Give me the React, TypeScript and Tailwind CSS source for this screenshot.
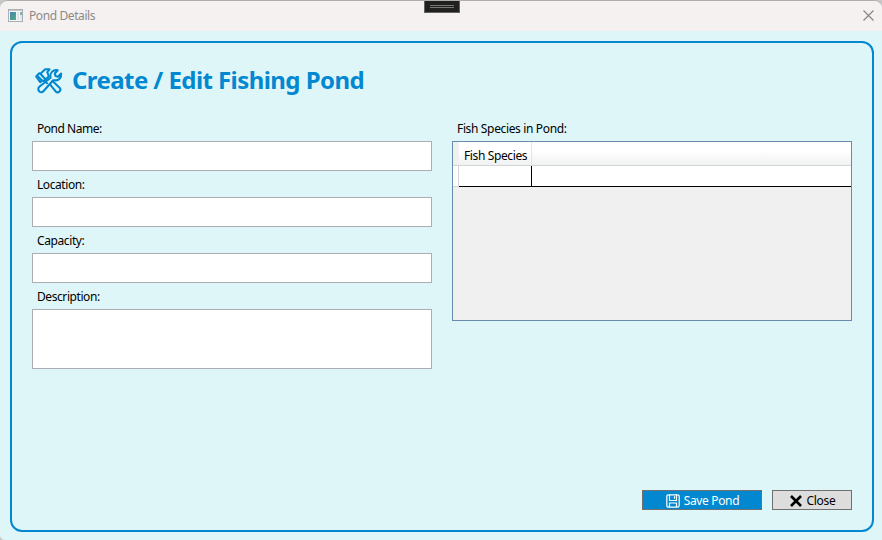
import React from 'react';

function WindowIcon() {
  return (
    <svg className="relative -top-px ml-2 h-[13px] w-[15px]" viewBox="0 0 15 13">
      <defs>
        <linearGradient id="pane" x1="0" y1="0" x2="1" y2="1">
          <stop offset="0" stopColor="#4780bb" />
          <stop offset="1" stopColor="#4fae78" />
        </linearGradient>
      </defs>
      <rect x="0.5" y="0.5" width="14" height="12" fill="#f4f6f7" stroke="#a9aeb3" />
      <rect x="1" y="1" width="13" height="1" fill="#c3c8cc" />
      <rect x="2" y="3" width="6" height="8" fill="url(#pane)" />
      <rect x="9" y="3" width="2" height="8" fill="#dfe3e6" />
      <rect x="12" y="3" width="2" height="3" fill="#79b7a0" />
      <rect x="12" y="6" width="2" height="5" fill="#dfe8ee" />
    </svg>
  );
}

function ToolsIcon() {
  return (
    <svg className="h-[26px] w-[28px] shrink-0" viewBox="0 0 28 26" fill="none" stroke="#0288d1" strokeWidth="2.1" strokeLinejoin="round" strokeLinecap="round">
      <path d="M14.800 16.200 20.600 23.300c2.300 2.700 6.200-.8 4.200-3.400L18.300 13.700" />
      <path d="M15.600 9.800c-.9-3.400.9-6.500 4-7.500 1.100-.4 2.100-.4 3.100-.1l-2.900 3.300.7 2.500 2.500.7 3.100-3.100c.6 4.100-2.600 7.300-6.200 6.700l-1.800-.1L8.900 22.700c-2.700 4-7.800-.7-4.600-3.900Z" />
      <path d="m1.200 8.500 3-3.200 1.500.3L10.200 1.300h4.300l-2.200 2.900 1.600 4.100-4.900 4.800-1.900-.5-1.900 1.500Z" fill="#dff6f9" />
      <path d="m5.600 6 4.600 5M3.300 8.700l3.200 3.300M9.400 12.700l2.600 2.500" />
    </svg>
  );
}

function SaveIcon() {
  return (
    <svg className="relative top-px left-px h-[14px] w-[14px] shrink-0" viewBox="0 0 14 14" fill="none" stroke="white" strokeWidth="1.2">
      <path d="M2.500.8h9a1.700 1.700 0 0 1 1.700 1.700v9a1.700 1.700 0 0 1-1.700 1.700h-9A1.700 1.700 0 0 1 .8 11.500v-9A1.700 1.700 0 0 1 2.500.8Z" />
      <path d="M3.500 1v5.500h7V1M3.500 13V9h7v4M8.500 2.200v2.600" />
    </svg>
  );
}

function Field({ label, tracking, tall }: { label: string; tracking: string; tall?: boolean }) {
  return (
    <label className="block">
      <span className={`flex h-[26px] items-center pt-[2px] pl-[5px] ${tracking}`}>{label}</span>
      {tall ? (
        <textarea className="block h-[60px] w-full resize-none border border-[#abadb3] bg-white outline-none" />
      ) : (
        <input className="block h-[30px] w-full border border-[#abadb3] bg-white outline-none" />
      )}
    </label>
  );
}

export default function App() {
  return (
    <div className="h-[540px] w-[882px] overflow-hidden bg-[#c8c8c8] font-['Noto_Sans','Open_Sans',sans-serif] text-[12px] leading-[16px] text-black">
      <div className="flex h-full flex-col overflow-hidden rounded-t-[8px] rounded-bl-[5px] border-t border-[#b0adad] bg-[#dff6f9]">
        <header className="relative flex h-[30px] shrink-0 items-center bg-[#f5f1f1]">
          <WindowIcon />
          <span className="ml-[6px] pb-px tracking-[-0.4px] text-[#8b8989]">Pond Details</span>
          <div className="absolute -top-px left-[424px] flex h-[13px] w-[36px] flex-col items-center gap-px border border-[#62625f] bg-[#20211f] pt-1">
            <i className="h-px w-6 bg-[#777773]" />
            <i className="h-px w-6 bg-[#777773]" />
          </div>
          <svg className="relative -top-px mr-2 ml-auto h-[11px] w-[11px]" viewBox="0 0 11 11" stroke="#858383" strokeWidth="1.1">
            <path d="m.5.5 10 10m0-10-10 10" />
          </svg>
        </header>

        <main className="mt-[10px] ml-[10px] flex h-[491px] w-[864px] flex-col rounded-[12px] border-2 border-[#0288d1] px-5 pb-5">
          <h1 className="flex h-[72px] items-center gap-[9px] pt-[3px] pl-[3px] text-[24px] leading-8 font-bold tracking-[-0.57px] text-[#0288d1]">
            <ToolsIcon />
            <span className="pb-[2px]">Create / Edit Fishing Pond</span>
          </h1>
          <div className="grid grid-cols-2 gap-5">
            <section>
              <Field label="Pond Name:" tracking="tracking-[-0.47px]" />
              <Field label="Location:" tracking="tracking-[-0.43px]" />
              <Field label="Capacity:" tracking="tracking-[-0.4px]" />
              <Field label="Description:" tracking="tracking-[-0.42px]" tall />
            </section>
            <section>
              <div className="flex h-[26px] items-center pt-[2px] pl-[5px] tracking-[-0.35px]">Fish Species in Pond:</div>
              <div className="h-[180px] border border-[#688caf] bg-[#f0f0f0]">
                <div className="flex h-6 border-b border-[#d5d5d5] bg-linear-to-b from-white from-40% to-[#f0f1f2]">
                  <div className="w-[6px] bg-[#f0f0f0]" />
                  <div className="flex w-[73px] items-center border-r border-[#e3e4e6] pt-[4px] pl-[5px] tracking-[-0.38px] whitespace-nowrap">Fish Species</div>
                </div>
                <div className="flex h-[21px]">
                  <div className="w-[6px] border-r border-b border-[#d5d5d5] bg-white" />
                  <div className="w-[73px] border-r border-b border-black bg-white" />
                  <div className="flex-1 border-b border-black bg-white" />
                </div>
              </div>
            </section>
          </div>
          <footer className="mt-auto flex justify-end gap-[10px]">
            <button className="flex h-5 w-[120px] items-center justify-center gap-[5px] border border-[#707070] bg-[#0288d1] tracking-[-0.35px] text-white">
              <SaveIcon />
              <span className="pt-[2px]">Save Pond</span>
            </button>
            <button className="flex h-5 w-20 items-center justify-center gap-[5px] border border-[#707070] bg-[#dddddd] tracking-[-0.3px]">
              <svg className="relative top-px left-px h-[12px] w-[12px]" viewBox="0 0 12 12" stroke="black" strokeWidth="2.6">
                <path d="m1 1 10 10M11 1 1 11" />
              </svg>
              <span className="pt-[2px] pl-px">Close</span>
            </button>
          </footer>
        </main>
      </div>
    </div>
  );
}
